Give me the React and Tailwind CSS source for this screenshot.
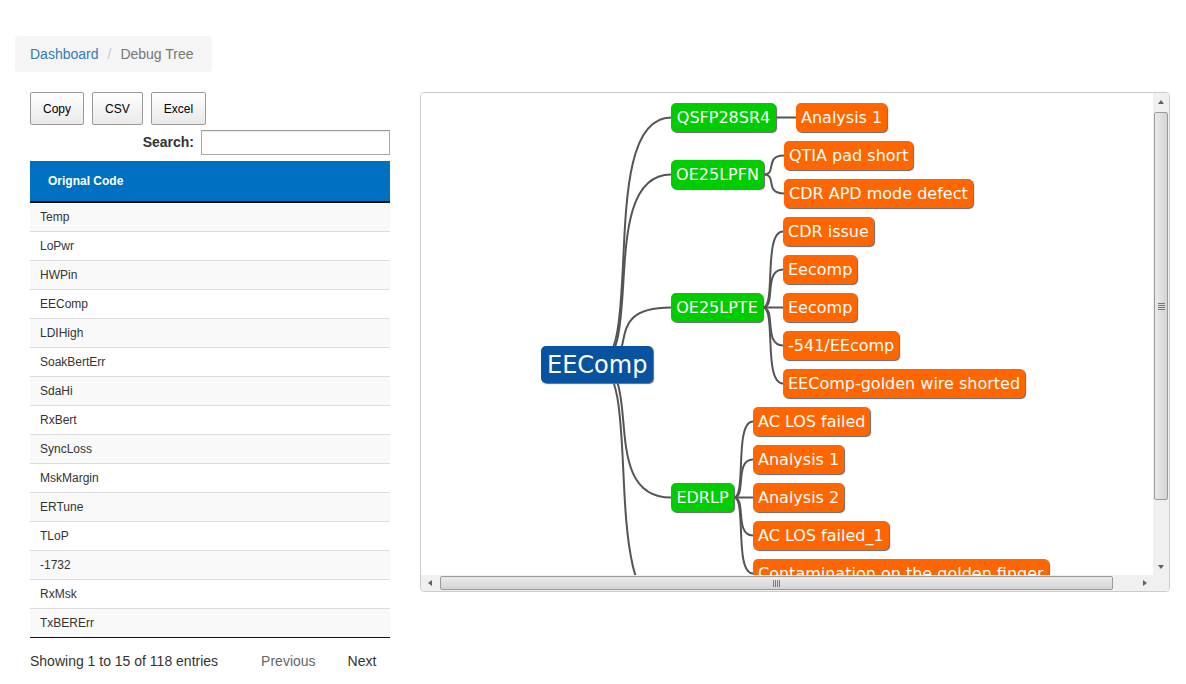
import React from 'react';

// codes shown in the first page of the table
const codes = [
  'Temp', 'LoPwr', 'HWPin', 'EEComp', 'LDIHigh', 'SoakBertErr', 'SdaHi', 'RxBert',
  'SyncLoss', 'MskMargin', 'ERTune', 'TLoP', '-1732', 'RxMsk', 'TxBERErr',
];

// mind map data: coordinates are relative to the canvas (inside the border)
const ROOT_OUT = { x: 175, y: 271.5 };
const branches = [
  { label: 'QSFP28SR4', top: 10, width: 105, childLeft: 375, children: [['Analysis 1', 10]] },
  {
    label: 'OE25LPFN', top: 67, width: 93, childLeft: 363,
    children: [['QTIA pad short', 48], ['CDR APD mode defect', 86]],
  },
  {
    label: 'OE25LPTE', top: 200, width: 92, childLeft: 362,
    children: [['CDR issue', 124], ['Eecomp', 162], ['Eecomp', 200], ['-541/EEcomp', 238], ['EEComp-golden wire shorted', 276]],
  },
  {
    label: 'EDRLP', top: 390, width: 63, childLeft: 332,
    children: [['AC LOS failed', 314], ['Analysis 1', 352], ['Analysis 2', 390], ['AC LOS failed_1', 428], ['Contamination on the golden finger', 466]],
  },
];

const GREEN_LEFT = 250;
const NODE_H = 29;

function curve(x1, y1, x2, y2) {
  return `M${x1} ${y1} C${x1 + ((x2 - x1) * 2) / 3} ${y1} ${x1} ${y2} ${x2} ${y2}`;
}

function Arrow({ dir }) {
  const pts = {
    up: '1,5 4,1 7,5',
    down: '1,1 4,5 7,1',
    left: '5,1 1,4 5,7',
    right: '1,1 5,4 1,7',
  }[dir];
  const size = dir === 'up' || dir === 'down' ? { w: 8, h: 6 } : { w: 6, h: 8 };
  return (
    <svg width={size.w} height={size.h} viewBox={`0 0 ${size.w} ${size.h}`}>
      <polygon points={pts} fill="#606060" />
    </svg>
  );
}

function MindMap() {
  return (
    <div className="relative h-[482px] flex-1 overflow-hidden bg-white" style={{ fontFamily: '"DejaVu Sans", Verdana, sans-serif' }}>
      <svg className="absolute left-0 top-0" width="732" height="482">
        <g fill="none" stroke="#555" strokeWidth="2">
          {branches.map((b) => (
            <path key={b.label} d={curve(ROOT_OUT.x, ROOT_OUT.y, GREEN_LEFT, b.top + NODE_H / 2)} />
          ))}
          <path d={curve(ROOT_OUT.x, ROOT_OUT.y, GREEN_LEFT, 518.5)} />
          {branches.map((b) =>
            b.children.map(([label, top], i) => (
              <path
                key={b.label + i}
                d={curve(GREEN_LEFT + b.width, b.top + NODE_H / 2, b.childLeft, top + NODE_H / 2)}
              />
            ))
          )}
        </g>
      </svg>

      {/* root */}
      <div
        className="absolute flex h-[37px] items-center rounded-[5px] bg-[#0753a0] px-[6px] text-[24px] leading-none text-white shadow-[1px_1px_1px_#666]"
        style={{ left: 120, top: 253 }}
      >
        EEComp
      </div>

      {branches.map((b) => (
        <React.Fragment key={b.label}>
          <div
            className="absolute flex h-[29px] items-center justify-center rounded-[5px] bg-[#00cc00] text-[16px] leading-none text-white shadow-[1px_1px_1px_#666]"
            style={{ left: GREEN_LEFT, top: b.top, width: b.width }}
          >
            {b.label}
          </div>
          {b.children.map(([label, top], i) => (
            <div
              key={i}
              className="absolute flex h-[29px] items-center whitespace-nowrap rounded-[5px] bg-[#ff6600] px-[5px] text-[16px] leading-none text-white shadow-[1px_1px_1px_#666]"
              style={{ left: b.childLeft, top }}
            >
              {label}
            </div>
          ))}
        </React.Fragment>
      ))}
    </div>
  );
}

function VScrollbar() {
  return (
    <div className="flex w-[16px] flex-col bg-[#f0f0f0]">
      <div className="flex h-[17px] items-center justify-center">
        <Arrow dir="up" />
      </div>
      <div className="mx-[1px] mt-[2px] flex h-[388px] flex-col items-center justify-center gap-[1px] rounded-[2px] border border-[#9a9a9a] bg-gradient-to-r from-[#eaeaea] to-[#d4d4d4]">
        <div className="h-[1px] w-[7px] bg-[#777]" />
        <div className="h-[1px] w-[7px] bg-[#777]" />
        <div className="h-[1px] w-[7px] bg-[#777]" />
        <div className="h-[1px] w-[7px] bg-[#777]" />
      </div>
      <div className="flex-1" />
      <div className="flex h-[17px] items-center justify-center">
        <Arrow dir="down" />
      </div>
    </div>
  );
}

function HScrollbar() {
  return (
    <div className="flex h-[16px]">
      <div className="flex flex-1 bg-[#f0f0f0]">
        <div className="flex w-[17px] items-center justify-center">
          <Arrow dir="left" />
        </div>
        <div className="my-[1px] ml-[2px] flex w-[673px] items-center justify-center gap-[1px] rounded-[2px] border border-[#9a9a9a] bg-gradient-to-b from-[#eaeaea] to-[#d4d4d4]">
          <div className="h-[7px] w-[1px] bg-[#777]" />
          <div className="h-[7px] w-[1px] bg-[#777]" />
          <div className="h-[7px] w-[1px] bg-[#777]" />
          <div className="h-[7px] w-[1px] bg-[#777]" />
        </div>
        <div className="flex-1" />
        <div className="flex w-[17px] items-center justify-center">
          <Arrow dir="right" />
        </div>
      </div>
      <div className="w-[16px] bg-[#f0f0f0]" />
    </div>
  );
}

export default function App() {
  return (
    <div className="min-h-[684px] bg-white px-[15px] pt-[36px] text-[#333]" style={{ fontFamily: '"Liberation Sans", Arial, sans-serif' }}>
      {/* Breadcrumb */}
      <div className="flex h-[36px] w-[197px] items-center gap-[9px] rounded-[4px] bg-[#f5f5f5] px-[15px] text-[14px]">
        <span className="text-[#337ab7]">Dashboard</span>
        <span className="text-[#ccc]">/</span>
        <span className="text-[#777]">Debug Tree</span>
      </div>

      <div className="mt-[20px] flex gap-[30px] pl-[15px]">
        {/* Left: table */}
        <div className="w-[360px]">
          <div className="flex gap-[8px]">
            {['Copy', 'CSV', 'Excel'].map((b) => (
              <button
                key={b}
                className="flex h-[33px] items-center rounded-[2px] border border-[#999] bg-gradient-to-b from-white to-[#e9e9e9] px-[12px] text-[12px] text-black"
              >
                {b}
              </button>
            ))}
          </div>
          <div className="mt-[5px] flex items-center justify-end gap-[7px]">
            <span className="text-[14px] font-bold text-[#333]">Search:</span>
            <div className="h-[25px] w-[189px] border border-[#aaa] border-t-[#999] bg-white shadow-[inset_0_1px_1px_rgba(0,0,0,0.08)]" />
          </div>
          <table className="mt-[6px] w-full border-collapse text-[12px]">
            <thead>
              <tr className="border-b-2 border-[#111] bg-[#0070c0]">
                <th className="h-[41px] pl-[18px] text-left font-bold text-white">Orignal Code</th>
              </tr>
            </thead>
            <tbody>
              {codes.map((c, i) => (
                <tr
                  key={c}
                  className={
                    i === codes.length - 1
                      ? 'border-b border-[#111] bg-[#f9f9f9]'
                      : i % 2 === 0
                        ? 'border-b border-[#ddd] bg-[#f9f9f9]'
                        : 'border-b border-[#ddd] bg-white'
                  }
                >
                  <td className="h-[29px] pl-[10px] text-[#333]">{c}</td>
                </tr>
              ))}
            </tbody>
          </table>
          <div className="mt-[13px] flex items-center text-[14px]">
            <span className="text-[#333]">Showing 1 to 15 of 118 entries</span>
            <span className="ml-[43px] text-[#666]">Previous</span>
            <span className="ml-[32px] text-[#333]">Next</span>
          </div>
        </div>

        {/* Right: mind map */}
        <div className="flex h-[500px] w-[750px] flex-col overflow-hidden rounded-[4px] border border-[#ccc]">
          <div className="flex">
            <MindMap />
            <VScrollbar />
          </div>
          <HScrollbar />
        </div>
      </div>
    </div>
  );
}
